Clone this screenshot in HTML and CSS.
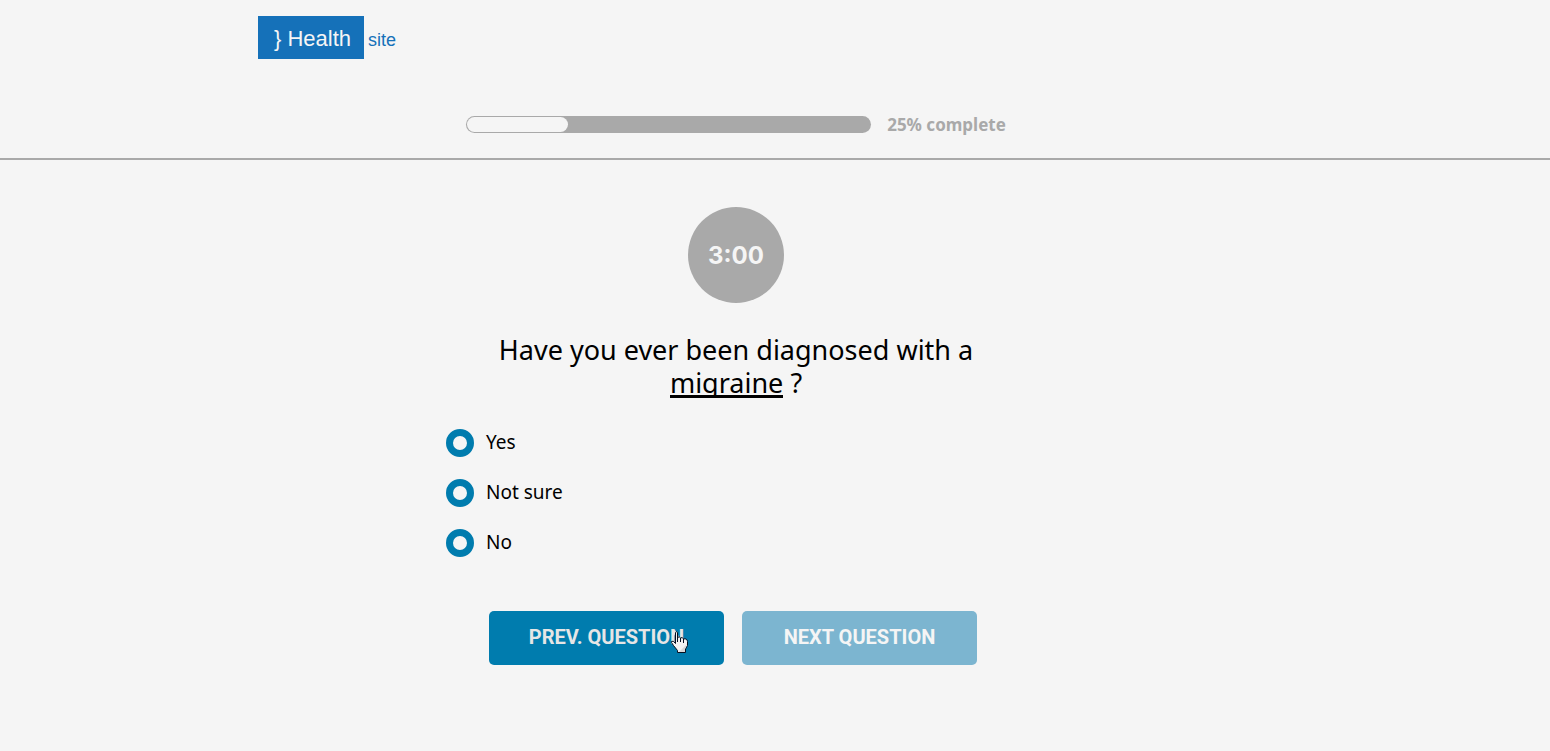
FILE: index.html
```html
<!DOCTYPE html>
<html lang="en">
<head>
<meta charset="utf-8">
<meta name="viewport" content="width=device-width, initial-scale=1">
<title>Health site</title>
<link rel="stylesheet" href="styles.css">
</head>
<body>
<header class="header">
  <div class="bar">
    <a class="logo" href="#"><span class="logo-box">} Health</span><span class="logo-site">site</span></a>
  </div>
  <div class="progress-row">
    <div class="progress" role="progressbar" aria-labelledby="progress-label" aria-valuenow="25" aria-valuemin="0" aria-valuemax="100"><div class="progress-value" style="width:25%"></div></div>
    <span class="progress-label" id="progress-label">25% complete</span>
  </div>
</header>
<main class="main">
  <form class="quiz">
    <div class="timer">3:00</div>
    <h1 class="question" id="question">Have you ever been diagnosed with a <a class="term" href="#">migraine</a> ?</h1>
    <div class="answers" role="radiogroup" aria-labelledby="question">
      <label class="answer"><input class="radio" type="radio" name="migraine" value="yes"><span class="answer-text">Yes</span></label>
      <label class="answer"><input class="radio" type="radio" name="migraine" value="unsure"><span class="answer-text">Not sure</span></label>
      <label class="answer"><input class="radio" type="radio" name="migraine" value="no"><span class="answer-text">No</span></label>
    </div>
    <div class="actions">
      <button class="button button-prev" type="button">PREV. QUESTION
        <svg class="pointer" width="17" height="22" viewBox="0 0 17 22" aria-hidden="true">
          <path d="M4.500 12.500V1.500Q5.500 0 6.500 1.500V6.500Q8.500 5 9.500 7Q11.500 5.500 12.500 8Q16 7 16.500 10.500V14.500L14.500 18V21.500H6.500V19.500L2.500 14.500L.5 11.500V10.500Q2 9 4.500 12.500Z" fill="#f3f3f3" stroke="#061020"/>
          <path d="M16 13L14 18V21H8Z" fill="#d8d8d8"/>
          <path d="M6.500 6V11M9.500 7V11M12.500 8V12" fill="none" stroke="#061020"/>
        </svg>
      </button>
      <button class="button button-next" type="button">NEXT QUESTION</button>
    </div>
  </form>
</main>
</body>
</html>
```

FILE: styles.css
```css
* { box-sizing: border-box; }
body {
  margin: 0;
  background: #f5f5f5;
  color: #000;
  font-family: "Noto Sans", sans-serif;
}
.header {
  padding: 16px 78px 22px 0;
  border-bottom: 2px solid #a9a9a9;
}
.bar { max-width: 956px; margin: 0 auto; }
.logo {
  display: inline-flex;
  align-items: center;
  gap: 4px;
  color: #1571b9;
  font-family: "Liberation Sans", Arial, sans-serif;
  text-decoration: none;
  vertical-align: top;
}
.logo-box {
  padding: 2px 13px 0 16px;
  background: #1571b9;
  color: #f5f5f5;
  font-size: 22px;
  line-height: 41px;
}
.logo-site { font-size: 18px; line-height: 24px; padding-top: 4px; }
.progress-row {
  display: flex;
  justify-content: center;
  align-items: center;
  gap: 16px;
  margin-top: 54px;
}
.progress {
  flex: 0 1 405px;
  height: 17px;
  padding: 1px;
  border-radius: 9px;
  background: #a9a9a9;
}
.progress-value { height: 100%; border-radius: 8px; background: #f5f5f5; }
.progress-label {
  padding-top: 1px;
  color: #a9a9a9;
  font-size: 17px;
  font-weight: 700;
  line-height: 22px;
}
.main { padding: 47px 78px 48px 0; }
.quiz { max-width: 580px; margin: 0 auto; }
.timer {
  width: 96px;
  margin: 0 auto 30px;
  padding-top: 2px;
  border-radius: 50%;
  background: #a9a9a9;
  color: #f5f5f5;
  font-family: Inter, sans-serif;
  font-size: 24px;
  font-weight: 700;
  line-height: 94px;
  text-align: center;
}
.question {
  max-width: 520px;
  margin: 0 auto 30px;
  font-size: 27px;
  font-weight: 400;
  line-height: 33px;
  text-align: center;
}
.term {
  display: inline-block;
  height: 32px;
  overflow: hidden;
  border-bottom: 3px solid #000;
  color: inherit;
  text-decoration: none;
  vertical-align: top;
}
.answers { display: flex; flex-direction: column; align-items: flex-start; gap: 22px; }
.answer {
  display: flex;
  align-items: center;
  gap: 12px;
  font-size: 19px;
}
.answer-text { line-height: 24px; padding-bottom: 3px; }
.radio {
  appearance: none;
  width: 28px;
  height: 28px;
  margin: 0;
  border: 7px solid #007cae;
  border-radius: 50%;
}
.radio:checked { background: #007cae; }
.actions {
  display: flex;
  justify-content: center;
  gap: 18px;
  margin-top: 54px;
  padding-right: 6px;
}
.button {
  position: relative;
  flex: 0 1 235px;
  height: 54px;
  padding: 0 0 2px;
  border: 0;
  border-radius: 5px;
  background: #007cae;
  color: #e6e6e6;
  font-family: Roboto, sans-serif;
  font-size: 20px;
  font-weight: 700;
  cursor: pointer;
}
.button-next { background: #7cb5d0; color: #f5f5f5; }
.pointer { position: absolute; top: 20px; right: 36px; }
```
